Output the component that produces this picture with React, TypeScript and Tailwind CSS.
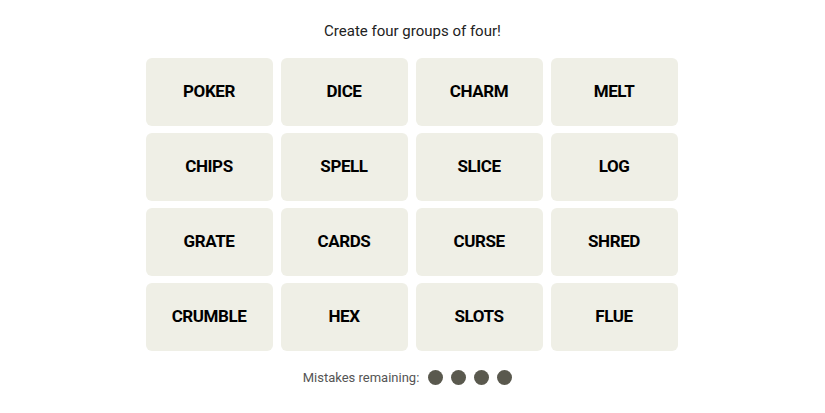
const words = [
  'POKER', 'DICE', 'CHARM', 'MELT',
  'CHIPS', 'SPELL', 'SLICE', 'LOG',
  'GRATE', 'CARDS', 'CURSE', 'SHRED',
  'CRUMBLE', 'HEX', 'SLOTS', 'FLUE',
];

export default function App() {
  return (
    <div className="w-[825px] h-[413px] bg-white flex flex-col items-center font-['Roboto',sans-serif] text-black">
      {/* Prompt */}
      <p className="mt-[21px] h-[20px] leading-[20px] text-[15px] text-[#222]">Create four groups of four!</p>

      {/* Board */}
      <div className="mt-[17px] -ml-[2px] grid grid-cols-[repeat(4,127px)] auto-rows-[68px] gap-x-[8px] gap-y-[7px]">
        {words.map(w => (
          <button
            key={w}
            className="rounded-md bg-[#efefe6] flex items-center justify-center text-[17px] font-bold tracking-tight"
          >
            {w}
          </button>
        ))}
      </div>

      {/* Mistakes */}
      <div className="mt-[17px] -ml-[10px] flex items-center gap-[9px]">
        <span className="text-[13px] text-[#555]">Mistakes remaining:</span>
        <div className="flex items-center gap-[8px]">
          {[0, 1, 2, 3].map(i => (
            <span key={i} className="w-[15px] h-[15px] rounded-full bg-[#5a594e]" />
          ))}
        </div>
      </div>
    </div>
  );
}
